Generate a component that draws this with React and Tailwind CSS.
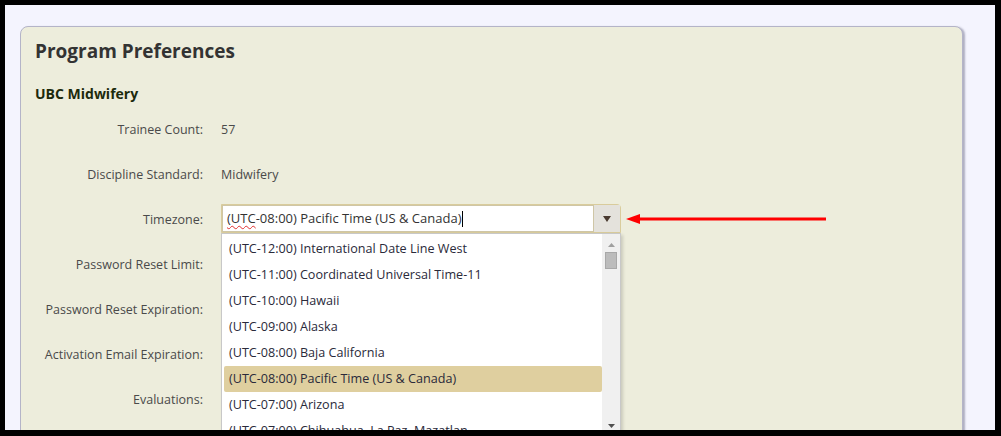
import React from "react";

const zones = [
  "(UTC-12:00) International Date Line West",
  "(UTC-11:00) Coordinated Universal Time-11",
  "(UTC-10:00) Hawaii",
  "(UTC-09:00) Alaska",
  "(UTC-08:00) Baja California",
  "(UTC-08:00) Pacific Time (US & Canada)",
  "(UTC-07:00) Arizona",
  "(UTC-07:00) Chihuahua, La Paz, Mazatlan",
];

const rows = [
  { label: "Trainee Count:", value: "57" },
  { label: "Discipline Standard:", value: "Midwifery" },
  { label: "Timezone:", select: true },
  { label: "Password Reset Limit:" },
  { label: "Password Reset Expiration:" },
  { label: "Activation Email Expiration:" },
  { label: "Evaluations:" },
];

function TimezoneSelect() {
  return (
    <div className="relative w-[400px]">
      <div className="flex h-[29px] rounded-tr-[4px] border border-[#d9cc9c] bg-[#d9cc9c]">
        <div className="flex flex-1 items-center border border-[#cfc6a6] bg-white pl-[4px] text-[13px] text-[#333]">
          <span className="underline decoration-wavy decoration-[#e03030] decoration-1 underline-offset-2">(UTC</span>
          <span>-08:00) Pacific Time (US &amp; Canada)</span>
          <span className="ml-[1px] h-[16px] w-[1px] bg-black"></span>
        </div>
        <div className="flex w-[26px] items-center justify-center bg-[#e4e2dc]">
          <svg width="8" height="6" viewBox="0 0 8 6">
            <path d="M0 0 H8 L4 6 Z" fill="#4a3a30" />
          </svg>
        </div>
      </div>
      <div className="absolute left-0 top-[29px] flex h-[200px] w-[400px] overflow-hidden border border-[#c8c8c8] bg-white shadow-[2px_2px_3px_rgba(0,0,0,0.15)]">
        <div className="flex-1 pl-[2px] pt-[2px]">
          {zones.map((z, i) => (
            <div
              key={i}
              className={`flex h-[26px] shrink-0 items-center rounded-[2px] pl-[5px] text-[12.6px] whitespace-nowrap text-[#2a2a3a] ${
                i === 5 ? "bg-[#dfcf9f]" : ""
              }`}
            >
              {z}
            </div>
          ))}
        </div>
        <div className="flex w-[18px] flex-col items-center bg-[#f0f0f0] pb-[4px] pt-[9px]">
          <svg width="7" height="4" viewBox="0 0 7 4">
            <path d="M0 4 H7 L3.5 0 Z" fill="#a0a0a0" />
          </svg>
          <div className="mt-[5px] h-[17px] w-[12px] border border-[#a8a8a8] bg-[#bcbcbc]"></div>
          <div className="flex-1"></div>
          <svg width="7" height="4" viewBox="0 0 7 4">
            <path d="M0 0 H7 L3.5 4 Z" fill="#505050" />
          </svg>
        </div>
      </div>
    </div>
  );
}

export default function App() {
  return (
    <div
      className="h-[436px] w-[1001px] overflow-hidden border-b-[6px] border-l-[5px] border-r-[6px] border-t-[5px] border-black bg-[#f4f4fe]"
      style={{ fontFamily: '"Open Sans", "Noto Sans", sans-serif' }}
    >
      <div className="pl-[15px] pt-[21px]">
        <div className="h-[460px] w-[943px] rounded-[8px] border border-[#b4b4c8] bg-[#ededdc] pl-[14px] pt-[9px] shadow-[2px_1px_2px_rgba(90,90,120,0.45)]">
          <h1 className="text-[19px] font-bold leading-[30px] text-[#333]">Program Preferences</h1>
          <h2 className="mt-[18px] text-[14px] font-bold leading-[20px] text-[#1c2a0c]">UBC Midwifery</h2>
          <div className="mt-[2px] grid grid-cols-[168px_1fr] gap-x-[18px]">
            {rows.map((r, i) => (
              <React.Fragment key={i}>
                <div className="flex h-[45px] items-center justify-end pt-[4px] text-[12.5px] text-[#4a4a4a]">{r.label}</div>
                {r.select ? (
                  <div className="flex h-[45px] items-center">
                    <TimezoneSelect />
                    <svg width="200" height="12" viewBox="0 0 200 12" className="ml-[5px]">
                      <path d="M12 6 H200" stroke="#ff0000" strokeWidth="3" />
                      <path d="M0 6 L14 1 L14 11 Z" fill="#ff0000" />
                    </svg>
                  </div>
                ) : (
                  <div className="flex h-[45px] items-center pt-[4px] text-[12.5px] text-[#4a4a4a]">{r.value}</div>
                )}
              </React.Fragment>
            ))}
          </div>
        </div>
      </div>
    </div>
  );
}
